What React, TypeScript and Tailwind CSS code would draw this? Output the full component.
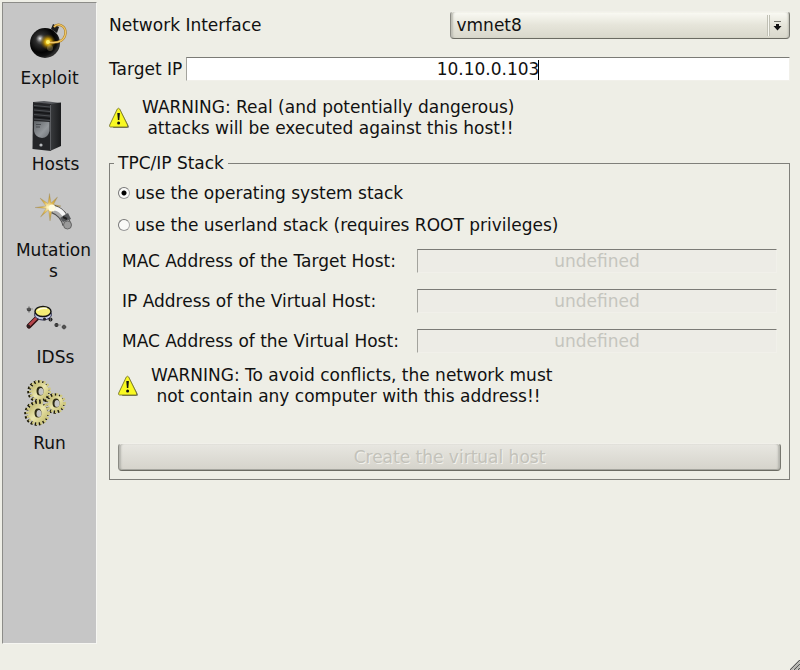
import React, { useState } from "react";

const FIELD =
  "h-6 border border-r-[#f1f0ea] border-b-[#f1f0ea] border-t-[#7b7b76] border-l-[#a3a39d] text-center";

const BEVEL =
  "h-7 rounded-[4px] border border-t-[#f1f0ea] border-l-[#8b8b84] border-r-[#77776f] border-b-[#6b6b63]";

function Bomb() {
  return (
    <svg viewBox="3 4 93 64" className="h-16 w-full" aria-hidden="true">
      <defs>
        <radialGradient id="bombBody" cx="0.36" cy="0.38" r="0.62">
          <stop offset="0" stopColor="#8a8a8a" />
          <stop offset="0.3" stopColor="#2b2b2b" />
          <stop offset="0.7" stopColor="#030303" />
          <stop offset="0.9" stopColor="#111" />
          <stop offset="1" stopColor="#2c2c2c" />
        </radialGradient>
        <radialGradient id="bombGlow">
          <stop offset="0" stopColor="#fff04a" />
          <stop offset="0.4" stopColor="#c99a08" />
          <stop offset="1" stopColor="#5a4200" stopOpacity="0" />
        </radialGradient>
        <radialGradient id="bombShine">
          <stop offset="0" stopColor="#f4f4f4" />
          <stop offset="1" stopColor="#888" stopOpacity="0" />
        </radialGradient>
      </defs>
      <path d="M51 29l2-5 6 3-2 6z" fill="#1c1c1c" />
      <circle cx="45" cy="43" r="15" fill="url(#bombBody)" />
      <circle cx="40" cy="38.500" r="4" fill="url(#bombShine)" />
      <circle cx="48" cy="42" r="8" fill="url(#bombGlow)" />
      <circle cx="50" cy="48" r="3" fill="#d8c890" opacity="0.3" />
      <path d="M54 27C58 22 66 26 65.500 33C65 40 59 44 48 42" fill="none" stroke="#a87a22" strokeWidth="2.400" />
      <path d="M54 27C58 22 66 26 65.500 33C65 40 59 44 48 42" fill="none" stroke="#f0c868" strokeWidth="1.300" />
      <circle cx="48" cy="42" r="2" fill="#fff36b" />
    </svg>
  );
}

function Tower() {
  return (
    <svg viewBox="3 90 93 64" className="h-16 w-full" aria-hidden="true">
      <defs>
        <linearGradient id="towerSide" x1="0" x2="1">
          <stop offset="0" stopColor="#3a3c3f" />
          <stop offset="1" stopColor="#1a1b1d" />
        </linearGradient>
        <linearGradient id="towerPlate" x1="0" y1="0" x2="1" y2="1">
          <stop offset="0" stopColor="#5d6165" />
          <stop offset="0.6" stopColor="#94989c" />
          <stop offset="1" stopColor="#6b6f74" />
        </linearGradient>
      </defs>
      <path d="M33 102L44 101L61 103L51 105z" fill="#5a5c60" />
      <path d="M50 104L61 102.500V146L50 151z" fill="url(#towerSide)" />
      <path d="M33 102L51 104V151L32.500 149z" fill="#242528" />
      <path d="M34 105.500L50 107M34 110L50 111.500M34 114.500L50 116M34 119L50 120.500" stroke="#4c4f53" />
      <path d="M34 107.500L50 109M34 112L50 113.500M34 117L50 118.500" stroke="#111214" />
      <path d="M34 121L49.500 122V131Q48 138 42 138Q35 137 34 131z" fill="url(#towerPlate)" />
      <path d="M36 124.500h5M36 127h4" stroke="#484b4f" />
      <circle cx="41" cy="145" r="1.600" fill="#b7babd" />
      <path d="M50.500 105V150.500" stroke="#5c5e62" />
    </svg>
  );
}

function Wand() {
  return (
    <svg viewBox="3 176 93 64" className="h-16 w-full" aria-hidden="true">
      <defs>
        <radialGradient id="spark">
          <stop offset="0" stopColor="#fff8c8" />
          <stop offset="0.45" stopColor="#deb54c" />
          <stop offset="1" stopColor="#a8883e" />
        </radialGradient>
      </defs>
      <path
        d="M49.500 193.500L51 203L57.500 197L53.500 204.500L61 206L54.500 208L57 213L52 210L50 221L48.500 210L40.500 217L46 208.500L35 207.500L46 206L40 198L48 203.500z"
        fill="url(#spark)"
        stroke="#a08c55"
        strokeWidth="0.300"
      />
      <path d="M53 209Q64 213 67 225" fill="none" stroke="#4f4f4f" strokeWidth="9" />
      <path d="M53.500 209Q64 213 67 225" fill="none" stroke="#aaa" strokeWidth="7" />
      <path d="M55 208.500Q61 210 64 215" fill="none" stroke="#f6f6f6" strokeWidth="4" />
      <path d="M60 218L68 213L71 219L63 222z" fill="#55575a" />
      <path d="M63 217L67 219" stroke="#1f1f1f" strokeWidth="2" />
      <circle cx="67.500" cy="225" r="4" fill="#9b9b9b" stroke="#666" />
      <circle cx="52" cy="208" r="3.500" fill="#fffbe0" />
    </svg>
  );
}

function Magnifier() {
  return (
    <svg viewBox="3 283 93 64" className="h-16 w-full" aria-hidden="true">
      <path d="M38 317L29 326" stroke="#321012" strokeWidth="5" strokeLinecap="round" />
      <path d="M38 316.500L29.500 325" stroke="#b8464c" strokeWidth="2.600" strokeLinecap="round" />
      <circle cx="28.500" cy="326" r="1.600" fill="#2d2021" />
      <ellipse cx="43" cy="314.500" rx="8.500" ry="5.500" fill="#c4c9e4" stroke="#272a4e" />
      <ellipse cx="43" cy="311.500" rx="8" ry="5" fill="#f4ed75" stroke="#161616" strokeWidth="1.500" />
      <path d="M37.500 310.500Q41 307.500 47 308.500" fill="none" stroke="#fffce0" strokeWidth="1.500" />
      <g fill="#222">
        <circle cx="29" cy="309.500" r="2" />
        <circle cx="44.500" cy="319" r="1.500" />
        <circle cx="50.500" cy="319.500" r="2" />
        <circle cx="56.500" cy="325" r="2" />
        <circle cx="64" cy="327" r="2" />
      </g>
      <path d="M26 309h7M29 306v7M54 325h7M61 327h6M50.500 317v5M64 324v6" stroke="#777" strokeWidth="0.700" />
    </svg>
  );
}

function Gear({ x, y, r }: { x: number; y: number; r: number }) {
  return (
    <g>
      <circle cx={x - 1.5} cy={y + 0.5} r={r - 1.5} fill="none" stroke="#1d1a08" strokeWidth="3.500" strokeDasharray="2.200 1.800" />
      <circle cx={x} cy={y} r={r - 1.5} fill="none" stroke="#d0c980" strokeWidth="3" strokeDasharray="2.200 1.800" />
      <circle cx={x} cy={y} r={r - 2.5} fill="url(#brass)" />
      <ellipse cx={x} cy={y} rx="3.500" ry="4.500" fill="#2f2c16" />
      <ellipse cx={x + 1} cy={y + 0.5} rx="2.500" ry="3.500" fill="#c6c6c6" />
    </g>
  );
}

function Gears() {
  return (
    <svg viewBox="3 369 93 64" className="h-16 w-full" aria-hidden="true">
      <defs>
        <linearGradient id="brass" x1="0" y1="0" x2="1" y2="1">
          <stop offset="0" stopColor="#b5ad5c" />
          <stop offset="0.5" stopColor="#ebe6ae" />
          <stop offset="1" stopColor="#bdb562" />
        </linearGradient>
      </defs>
      <Gear x={40} y={391} r={11} />
      <Gear x={56} y={403} r={10} />
      <Gear x={38} y={413} r={12} />
    </svg>
  );
}

const NAV = [
  { label: "Exploit", icon: Bomb, indent: "" },
  { label: "Hosts", icon: Tower, indent: "pl-3" },
  { label: "Mutations", icon: Wand, indent: "pl-2" },
  { label: "IDSs", icon: Magnifier, indent: "pl-3" },
  { label: "Run", icon: Gears, indent: "" },
];

function WarningIcon() {
  return (
    <svg viewBox="0 0 20 22" className="h-[22px] w-5 shrink-0" aria-hidden="true">
      <path d="M11 2.500L20 19.500Q20 21 18 21H4z" fill="#77776a" />
      <path
        d="M8.300 2Q9.500 0.500 10.700 2L18.500 18Q19 20 17.500 20H1.500Q0.200 20 0.700 18z"
        fill="#f9f922"
        stroke="#77752a"
        strokeWidth="0.900"
      />
      <path d="M8.300 6h2.600l-0.600 7H8.900z" fill="#111" />
      <circle cx="9.600" cy="16" r="1.500" fill="#111" />
    </svg>
  );
}

function Warning({ lines }: { lines: string[] }) {
  return (
    <div className="flex items-center gap-[13px]">
      <WarningIcon />
      <p className="whitespace-pre-wrap">{lines.join("\n ")}</p>
    </div>
  );
}

function StackOption({
  id,
  label,
  checked,
  onSelect,
}: {
  id: string;
  label: string;
  checked: boolean;
  onSelect: () => void;
}) {
  return (
    <div className="flex h-8 items-center gap-[5px]">
      <input
        id={id}
        type="radio"
        name="stack"
        checked={checked}
        onChange={onSelect}
        className="size-3 shrink-0 appearance-none rounded-full border border-t-[#777] border-l-[#777] border-r-[#aaa] border-b-[#999] bg-[#fafaf8] checked:bg-[radial-gradient(circle,#000_0_2px,#fafaf8_3px)]"
      />
      <label htmlFor={id}>{label}</label>
    </div>
  );
}

function AddressRow({ id, label }: { id: string; label: string }) {
  return (
    <div className="flex h-10 items-center px-1">
      <label htmlFor={id} className="w-[295px] shrink-0">
        {label}
      </label>
      <input
        id={id}
        disabled
        defaultValue="undefined"
        className={`${FIELD} min-w-0 flex-1 bg-[#edece6] text-[#c5c5be]`}
      />
    </div>
  );
}

export default function App() {
  const [stack, setStack] = useState("os");
  const [ip, setIp] = useState("10.10.0.103");

  return (
    <div className="relative flex min-h-screen bg-[#eeeee6] pt-[2px] pb-[26px] pl-[2px] font-['DejaVu_Sans',sans-serif] text-[17px] leading-[21px] text-[#111]">
      <nav className="flex w-[95px] shrink-0 flex-col gap-px border border-t-[#8c8c88] border-l-[#8c8c88] border-r-[#f6f6f2] border-b-[#f6f6f2] bg-[#c6c6c6] pt-px">
        {NAV.map(({ label, icon: Icon, indent }) => (
          <button key={label} type="button" className="flex flex-col items-center">
            <Icon />
            <span className={`max-w-[88px] break-all ${indent}`}>{label}</span>
          </button>
        ))}
      </nav>

      <main className="min-w-0 flex-1 pt-[9px] pr-[10px] pl-3">
        <div className="flex h-7 items-center justify-between">
          <label htmlFor="interface">Network Interface</label>
          <div className="relative w-1/2">
            <select
              id="interface"
              className={`${BEVEL} block w-full appearance-none bg-linear-to-b from-[#fafaf4] via-[#e6e5da] to-[#d9d8cc] pr-7 pl-[6px] shadow-[inset_3px_0_2px_-1px_#bdbdb4,inset_-2px_0_2px_-1px_#bdbdb4]`}
            >
              <option>vmnet8</option>
            </select>
            <svg
              viewBox="0 0 24 26"
              className="pointer-events-none absolute top-px right-px h-[26px] w-6"
              aria-hidden="true"
            >
              <path d="M2.500 3V24M4.500 3V24" stroke="#c0c0b4" />
              <path d="M3.500 3V24" stroke="#f8f8f2" />
              <path d="M9 9.500H16" stroke="#77776f" />
              <path d="M11 12h3v2h2.500L12.500 18.500L8.500 14H11z" fill="#111" />
            </svg>
          </div>
        </div>

        <div className="mt-[18px] flex h-6 items-center">
          <label htmlFor="target" className="w-[77px] shrink-0">
            Target IP
          </label>
          <div className="relative flex-1">
            <input
              id="target"
              value={ip}
              onChange={(e) => setIp(e.target.value)}
              className={`${FIELD} block w-full bg-white`}
            />
            <span className="absolute top-[3px] left-[calc(50%+50px)] h-5 w-px bg-black" aria-hidden="true" />
          </div>
        </div>

        <div className="mt-4">
          <Warning lines={["WARNING: Real (and potentially dangerous)", "attacks will be executed against this host!!"]} />
        </div>

        <fieldset className="mt-[14px] border border-[#7f7f7a] px-2 pt-[3px] pb-2">
          <legend className="-ml-1 px-1">TPC/IP Stack</legend>
          <StackOption
            id="stack-os"
            label="use the operating system stack"
            checked={stack === "os"}
            onSelect={() => setStack("os")}
          />
          <StackOption
            id="stack-user"
            label="use the userland stack (requires ROOT privileges)"
            checked={stack === "user"}
            onSelect={() => setStack("user")}
          />
          <AddressRow id="target-mac" label="MAC Address of the Target Host:" />
          <AddressRow id="virtual-ip" label="IP Address of the Virtual Host:" />
          <AddressRow id="virtual-mac" label="MAC Address of the Virtual Host:" />
          <div className="pt-1">
            <Warning
              lines={["WARNING: To avoid conflicts, the network must", "not contain any computer with this address!!"]}
            />
          </div>
          <button
            type="button"
            disabled
            className={`${BEVEL} mt-9 block w-full bg-linear-to-b from-[#e8e7e1] to-[#d5d3cb] text-[#c3c2ba] shadow-[inset_3px_0_2px_-1px_#b5b5ae,inset_-3px_0_2px_-1px_#b5b5ae,inset_0_-1px_0_#a5a59d] [text-shadow:1px_1px_0_#f2f1ec]`}
          >
            Create the virtual host
          </button>
        </fieldset>
      </main>

      <svg viewBox="0 0 10 10" className="absolute right-0 bottom-0 size-[10px]" aria-hidden="true">
        <path d="M0 10L10 0M4 10L10 4M8 10L10 8" stroke="#555" strokeWidth="1.200" />
        <path d="M2 10L10 2M6 10L10 6" stroke="#b5b5b0" />
      </svg>
    </div>
  );
}
